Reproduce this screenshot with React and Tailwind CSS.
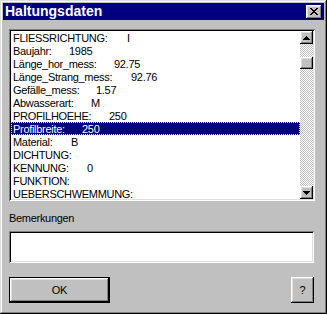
import React from "react";

const rows = [
  { l: "FLIESSRICHTUNG:", v: "I", w: "w-[114px]" },
  { l: "Baujahr:", v: "1985", w: "w-[56px]" },
  { l: "Länge_hor_mess:", v: "92.75", w: "w-[101px]" },
  { l: "Länge_Strang_mess:", v: "92.76", w: "w-[118px]" },
  { l: "Gefälle_mess:", v: "1.57", w: "w-[83px]" },
  { l: "Abwasserart:", v: "M", w: "w-[78px]" },
  { l: "PROFILHOEHE:", v: "250", w: "w-[96px]" },
  { l: "Profilbreite:", v: "250", w: "w-[69px]", sel: true },
  { l: "Material:", v: "B", w: "w-[58px]" },
  { l: "DICHTUNG:", v: "" },
  { l: "KENNUNG:", v: "0", w: "w-[74px]" },
  { l: "FUNKTION:", v: "" },
  { l: "UEBERSCHWEMMUNG:", v: "" },
];

const raised =
  "bg-[#c0c0c0] shadow-[inset_-1px_-1px_#000,inset_1px_1px_#fff,inset_-2px_-2px_#808080,inset_2px_2px_#dfdfdf]";
const sunken =
  "shadow-[inset_1px_1px_#808080,inset_-1px_-1px_#fff,inset_2px_2px_#000,inset_-2px_-2px_#dfdfdf]";

function CloseGlyph() {
  const px = [
    "XX....XX",
    ".XX..XX.",
    "..XXXX..",
    "...XX...",
    "..XXXX..",
    ".XX..XX.",
    "XX....XX",
  ];
  return (
    <svg width="8" height="7" viewBox="0 0 8 7" shapeRendering="crispEdges">
      {px.flatMap((r, y) =>
        r.split("").map((c, x) =>
          c === "X" ? <rect key={`${x}-${y}`} x={x} y={y} width="1" height="1" fill="#000" /> : null
        )
      )}
    </svg>
  );
}

function Arrow({ up }) {
  return (
    <svg width="7" height="4" viewBox="0 0 7 4" shapeRendering="crispEdges">
      {up ? (
        <>
          <rect x="3" y="0" width="1" height="1" fill="#000" />
          <rect x="2" y="1" width="3" height="1" fill="#000" />
          <rect x="1" y="2" width="5" height="1" fill="#000" />
          <rect x="0" y="3" width="7" height="1" fill="#000" />
        </>
      ) : (
        <>
          <rect x="0" y="0" width="7" height="1" fill="#000" />
          <rect x="1" y="1" width="5" height="1" fill="#000" />
          <rect x="2" y="2" width="3" height="1" fill="#000" />
          <rect x="3" y="3" width="1" height="1" fill="#000" />
        </>
      )}
    </svg>
  );
}

export default function App() {
  return (
    <div
      className="w-[327px] h-[314px] bg-[#c0c0c0] p-[3px] flex flex-col shadow-[inset_-1px_-1px_#000,inset_1px_1px_#dfdfdf,inset_-2px_-2px_#808080,inset_2px_2px_#fff] text-black"
      style={{ fontFamily: '"Liberation Sans", Arial, sans-serif' }}
    >
      {/* Title bar */}
      <div className="h-[17px] bg-[#000080] flex items-center justify-between pl-[2px] pr-[2px]">
        <span className="text-white font-bold text-[14px] leading-[16px] pb-px">Haltungsdaten</span>
        <button className={`w-[16px] h-[14px] flex items-center justify-center ${raised}`}>
          <CloseGlyph />
        </button>
      </div>

      <div className="flex flex-col pl-[6px] pt-[9px] text-[11px] tracking-[-0.3px]">
        {/* List box */}
        <div className={`w-[306px] h-[172px] bg-white p-[2px] flex ${sunken}`}>
          <div className="flex-1 overflow-hidden">
            {rows.map((r, i) => (
              <div
                key={i}
                className={`h-[13px] leading-[14px] pl-[2px] flex whitespace-pre ${
                  r.sel ? "bg-[#000080] text-white outline-1 outline-dotted outline-[#ffff80] -outline-offset-1" : ""
                }`}
              >
                <span className={`inline-block ${r.w || ""}`}>{r.l}</span>
                {r.v && <span>{r.v}</span>}
              </div>
            ))}
          </div>
          {/* Scrollbar */}
          <div className="w-[13px] flex flex-col bg-[repeating-conic-gradient(#c0c0c0_0%_25%,#ffffff_0%_50%)] bg-[length:2px_2px]">
            <div className={`h-[13px] flex items-center justify-center ${raised}`}>
              <Arrow up />
            </div>
            <div className="h-[13px]" />
            <div className={`h-[12px] ${raised}`} />
            <div className="flex-1" />
            <div className={`h-[13px] flex items-center justify-center ${raised}`}>
              <Arrow />
            </div>
          </div>
        </div>

        <div className="mt-[10px] h-[14px] leading-[14px]">Bemerkungen</div>

        <div className={`mt-[6px] w-[305px] h-[32px] bg-white ${sunken}`} />

        <div className="mt-[14px] w-[305px] flex justify-between">
          <button className="w-[101px] h-[26px] border border-black p-0">
            <div className={`w-full h-full flex items-center justify-center ${raised}`}>OK</div>
          </button>
          <button className={`w-[23px] h-[26px] flex items-center justify-center ${raised}`}>?</button>
        </div>
      </div>
    </div>
  );
}
